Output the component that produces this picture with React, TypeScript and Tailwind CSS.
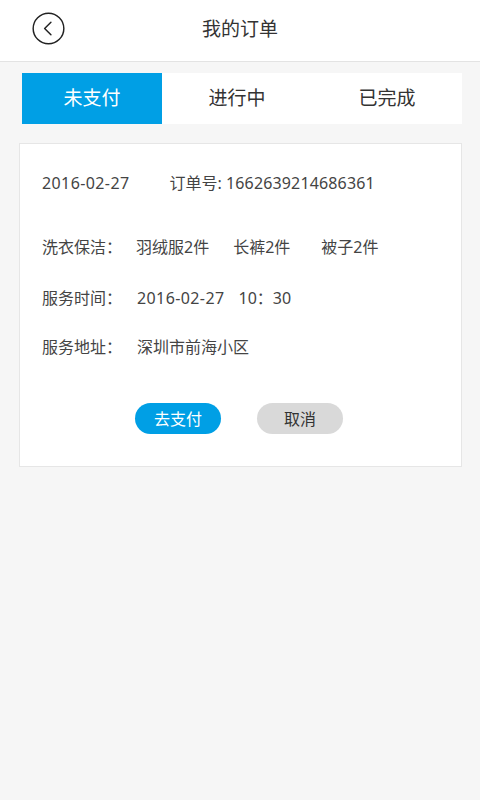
import { useState } from 'react';

const tabs = ['未支付', '进行中', '已完成'];

export default function App() {
    const [active, setActive] = useState(0);

    return (
        <div className="min-h-[800px] w-[480px] bg-[#f6f6f6] text-[#444] font-['Noto_Sans','Noto_Sans_CJK_SC',sans-serif]">
            <header className="h-[62px] bg-white border-b border-[#e3e3e3] flex items-center relative">
                <button className="ml-[32px] -mt-[4px] w-[33px] h-[33px]">
                    <svg viewBox="0 0 34 34" className="w-[33px] h-[33px]" fill="none" stroke="#222" strokeWidth="1.5">
                        <circle cx="17" cy="17" r="15.8" />
                        <path d="M19.5 10.5 L13 17 L19.5 23.5" strokeLinecap="round" strokeLinejoin="round" />
                    </svg>
                </button>
                <h1 className="absolute left-0 right-0 -mt-[3px] text-center text-[19px] text-[#333] pointer-events-none">我的订单</h1>
            </header>

            <div className="ml-[22px] mr-[18px] mt-[11px] h-[51px] bg-white flex">
                {tabs.map((t, i) => (
                    <button
                        key={t}
                        onClick={() => setActive(i)}
                        className={
                            i === active
                                ? 'w-[140px] bg-[#009fe5] text-white text-[19px]'
                                : 'flex-1 text-[#333] text-[19px]'
                        }
                    >
                        {t}
                    </button>
                ))}
            </div>

            <div className="ml-[19px] mr-[18px] mt-[19px] h-[324px] bg-white border border-[#e6e6e6] px-[22px] pt-[26px] text-[16px]">
                <div className="flex h-[25px] items-center">
                    <span className="tracking-[0.4px]">2016-02-27</span>
                    <span className="ml-[40px]">订单号: <span className="tracking-[0.15px]">1662639214686361</span></span>
                </div>

                <div className="flex h-[25px] items-center mt-[39px]">
                    <span className="w-[94px]">洗衣保洁：</span>
                    <span>羽绒服2件</span>
                    <span className="ml-[24px]">长裤2件</span>
                    <span className="ml-[31px]">被子2件</span>
                </div>

                <div className="flex h-[25px] items-center mt-[26px]">
                    <span className="w-[95px]">服务时间：</span>
                    <span className="tracking-[0.4px]">2016-02-27</span>
                    <span className="ml-[14px]">10：30</span>
                </div>

                <div className="flex h-[25px] items-center mt-[24px]">
                    <span className="w-[95px]">服务地址：</span>
                    <span>深圳市前海小区</span>
                </div>

                <div className="flex justify-center gap-[36px] mt-[44px] pr-[3px]">
                    <button className="w-[86px] h-[31px] rounded-full bg-[#009fe5] text-white text-[16px]">去支付</button>
                    <button className="w-[86px] h-[31px] rounded-full bg-[#d9d9d9] text-[#333] text-[16px]">取消</button>
                </div>
            </div>
        </div>
    );
}
